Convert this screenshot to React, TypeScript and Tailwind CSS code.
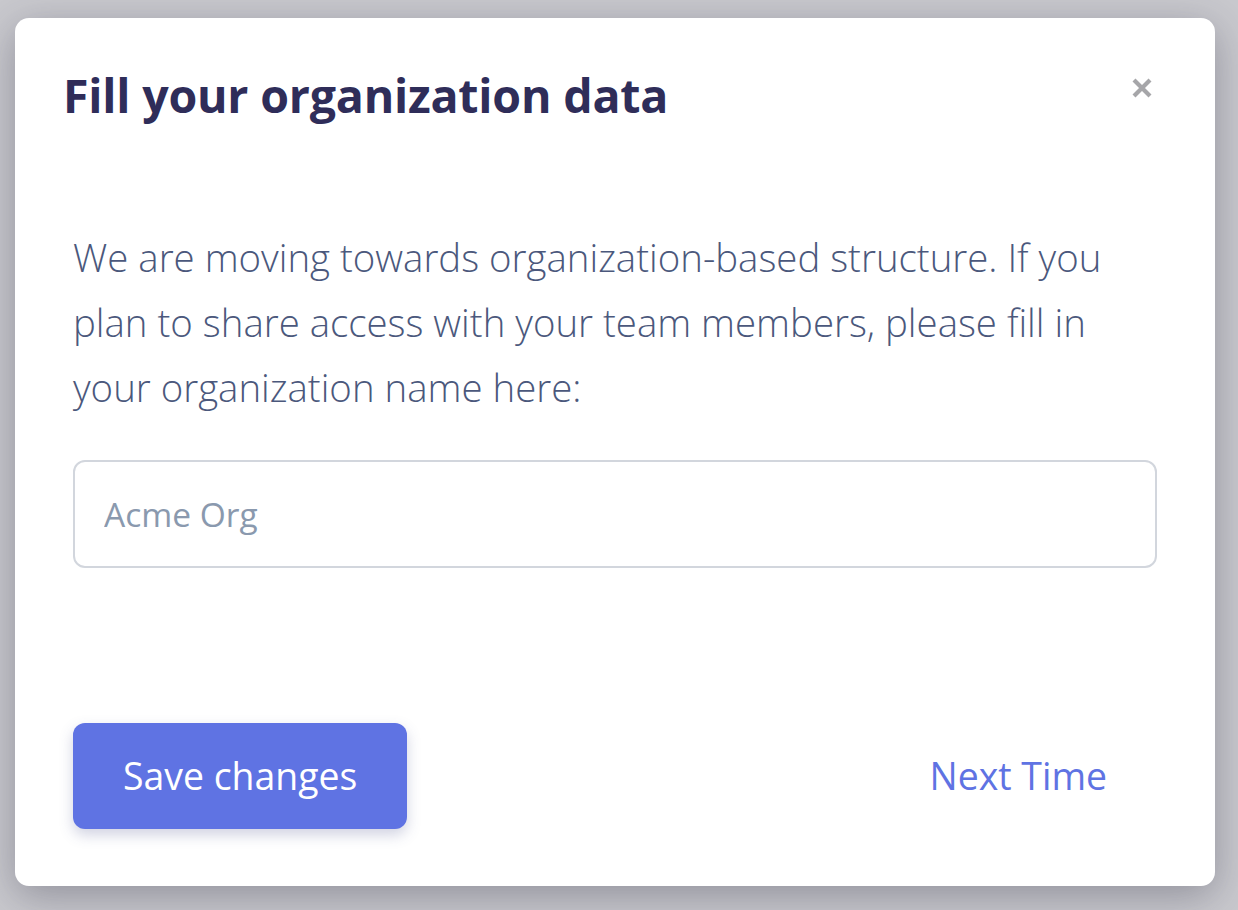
export default function App() {
  return (
    <div
      className="min-h-screen w-full bg-[#c9c9ce] pt-[18px] pl-[15px]"
      style={{ fontFamily: '"Open Sans", "Noto Sans", sans-serif' }}
    >
      <div className="w-[1200px] h-[868px] bg-white rounded-[14px] shadow-[0_10px_40px_rgba(40,40,60,0.35)] flex flex-col">
        {/* Header */}
        <div className="flex items-start justify-between pl-[48px] pr-[61px] pt-[50px]">
          <h2 className="text-[46.5px] leading-[55px] font-bold text-[#2f2d59] tracking-[-0.2px]">
            Fill your organization data
          </h2>
          <button className="mt-[8px] text-[#a6a6a9]">
            <svg width="24" height="24" viewBox="0 0 24 24" fill="none" stroke="currentColor" strokeWidth="4.2">
              <path d="M4 4 20 20M20 4 4 20" />
            </svg>
          </button>
        </div>

        {/* Body */}
        <div className="px-[58px] pt-[102px] flex flex-col">
          <p className="text-[38.4px] leading-[65px] font-light text-[#4b587c]">
            We are moving towards organization-based structure. If you plan to share access with your
            team members, please fill in your organization name here:
          </p>
          <input
            type="text"
            placeholder="Acme Org"
            className="mt-[40px] h-[108px] w-full rounded-[12px] border-2 border-[#d2d6dd] px-[29px] text-[33.5px] text-[#2f2d59] placeholder:text-[#8a99ae] outline-none"
          />
        </div>

        {/* Footer */}
        <div className="mt-auto px-[58px] pb-[57px] flex items-center justify-between">
          <button className="h-[106px] px-[50px] rounded-[12px] bg-[#5f73e3] text-white text-[37.4px] shadow-[0_6px_14px_rgba(70,80,140,0.25)]">
            Save changes
          </button>
          <button className="h-[106px] px-[50px] text-[#5f73e3] text-[37.4px]">Next Time</button>
        </div>
      </div>
    </div>
  );
}
